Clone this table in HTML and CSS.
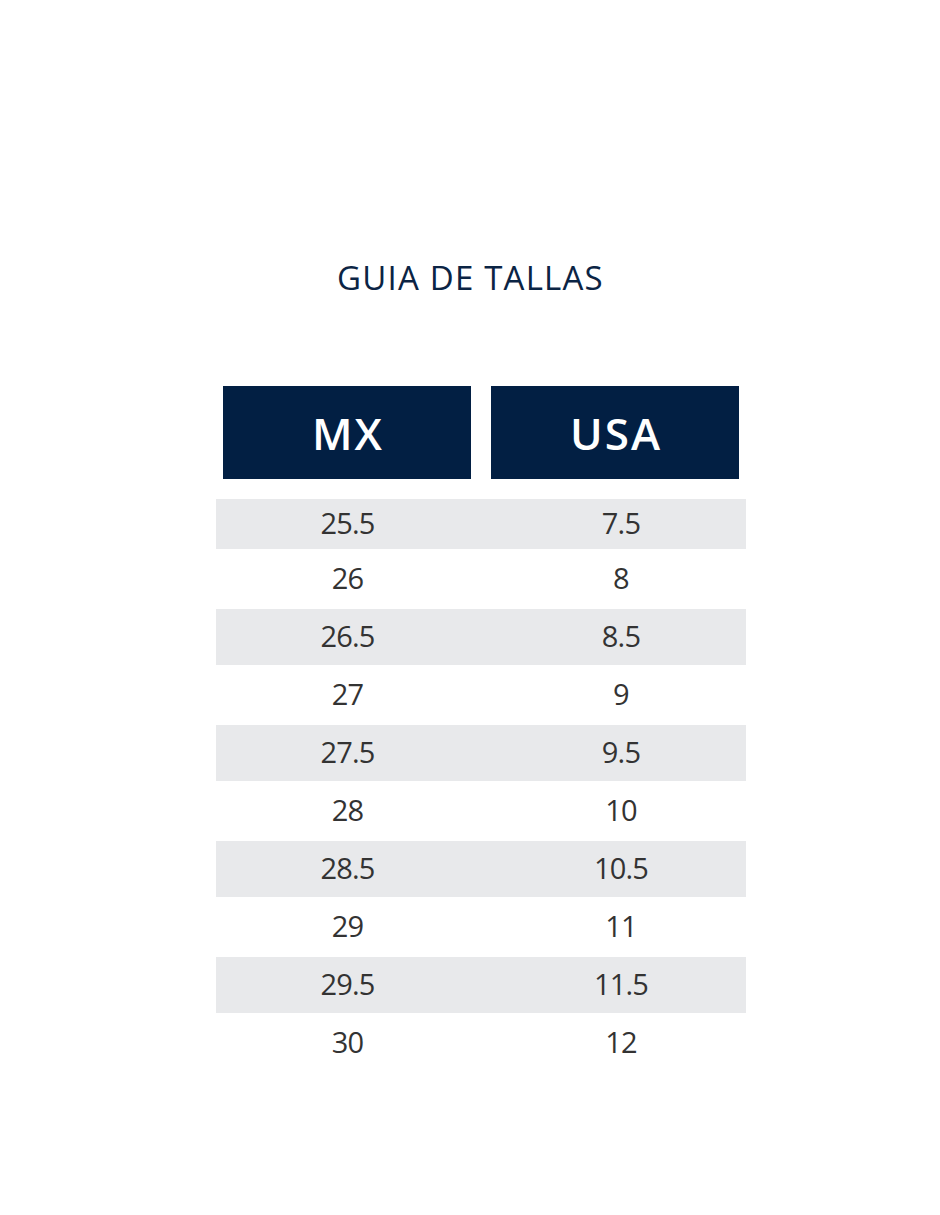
FILE: index.html
```html
<!DOCTYPE html>
<html lang="es">
<head>
<meta charset="utf-8">
<title>Guia de tallas</title>
<link rel="stylesheet" href="styles.css">
</head>
<body>
<main class="page">
  <h1 class="title">GUIA DE TALLAS</h1>
  <section class="chart">
    <div class="chart-head">
      <div class="head-cell">MX</div>
      <div class="head-cell">USA</div>
    </div>
    <div class="rows">
      <div class="row shade first"><span class="mx">25.5</span><span class="us">7.5</span></div>
      <div class="row"><span class="mx">26</span><span class="us">8</span></div>
      <div class="row shade"><span class="mx">26.5</span><span class="us">8.5</span></div>
      <div class="row"><span class="mx">27</span><span class="us">9</span></div>
      <div class="row shade"><span class="mx">27.5</span><span class="us">9.5</span></div>
      <div class="row"><span class="mx">28</span><span class="us">10</span></div>
      <div class="row shade"><span class="mx">28.5</span><span class="us">10.5</span></div>
      <div class="row"><span class="mx">29</span><span class="us">11</span></div>
      <div class="row shade"><span class="mx">29.5</span><span class="us">11.5</span></div>
      <div class="row"><span class="mx">30</span><span class="us">12</span></div>
    </div>
  </section>
</main>
</body>
</html>
```

FILE: styles.css
```css
html, body {
  margin: 0;
  padding: 0;
  background: #ffffff;
}

body {
  font-family: "Open Sans", "Liberation Sans", sans-serif;
}

.page {
  width: 940px;
  min-height: 1215px;
  display: flex;
  flex-direction: column;
  align-items: center;
  padding-top: 258px;
  box-sizing: border-box;
}

.title {
  margin: 0;
  font-size: 33px;
  line-height: 40px;
  font-weight: 500;
  letter-spacing: 1.2px;
  color: #0b2444;
  text-align: center;
  padding-left: 1px;
}

.chart {
  width: 530px;
  margin-top: 88px;
  margin-left: 22px;
}

.chart-head {
  display: flex;
  gap: 20px;
  padding: 0 7px;
}

.head-cell {
  width: 248px;
  height: 93px;
  background: #021f43;
  color: #ffffff;
  display: flex;
  align-items: center;
  justify-content: center;
  font-size: 44px;
  font-weight: 600;
  letter-spacing: 2px;
  padding-left: 2px;
  box-sizing: border-box;
}

.rows {
  margin-top: 20px;
  display: flex;
  flex-direction: column;
}

.row {
  display: flex;
  align-items: center;
  height: 60px;
  padding-bottom: 4px;
  box-sizing: border-box;
  font-size: 29px;
  font-weight: 500;
  letter-spacing: -0.8px;
  color: #333333;
}

.row.shade {
  height: 56px;
  background: #e8e9eb;
}

.row.first {
  height: 50px;
}

.mx {
  width: 263px;
  text-align: center;
}

.us {
  flex: 1;
  text-align: center;
  padding-left: 17px;
}
```
